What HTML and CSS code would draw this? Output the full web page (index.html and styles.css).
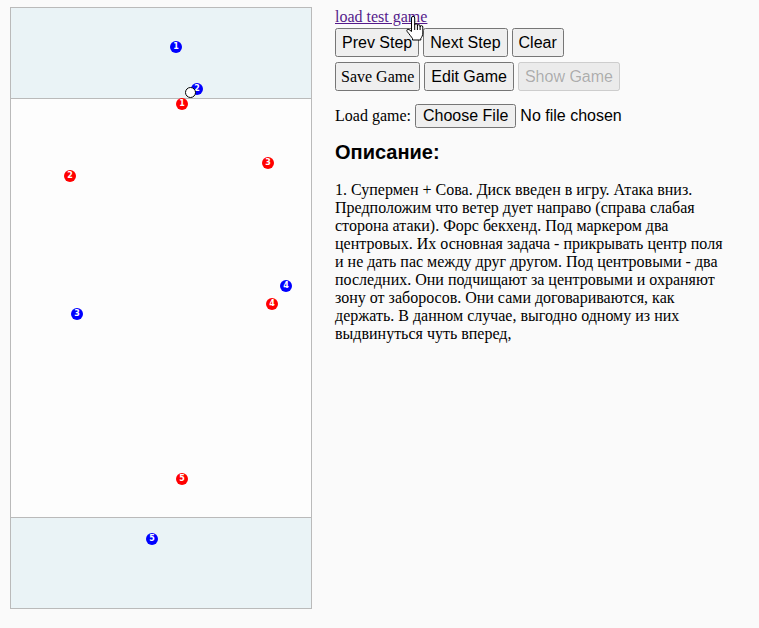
FILE: index.html
```html
<!DOCTYPE html>
<html>
<head>
<meta charset="utf-8">
<link rel="stylesheet" href="styles.css">
</head>
<body>
<div class="page">
  <div class="field">
    <div class="zone"></div>
    <div class="middle"></div>
    <div class="zone zone-bottom"></div>
    <span class="p blue" style="left:159px;top:33px">1</span>
    <span class="p blue" style="left:180px;top:75px">2</span>
    <span class="ball" style="left:174px;top:79px"></span>
    <span class="p red" style="left:165px;top:90px">1</span>
    <span class="p red" style="left:53px;top:162px">2</span>
    <span class="p red" style="left:251px;top:149px">3</span>
    <span class="p blue" style="left:269px;top:272px">4</span>
    <span class="p red" style="left:255px;top:290px">4</span>
    <span class="p blue" style="left:60px;top:300px">3</span>
    <span class="p red" style="left:165px;top:465px">5</span>
    <span class="p blue" style="left:135px;top:525px">5</span>
  </div>
  <div class="side">
    <div class="linkline"><a href="#" class="testlink">load test game</a></div>
    <div class="row row1">
      <button class="btn">Prev Step</button> <button class="btn">Next Step</button> <button class="btn">Clear</button>
    </div>
    <div class="row row2">
      <button class="btn btn-serif">Save Game</button> <button class="btn">Edit Game</button> <button class="btn" disabled>Show Game</button>
    </div>
    <div class="loadrow">Load game: <input type="file" class="file"></div>
    <h3 class="title">Описание:</h3>
    <p class="desc">1. Супермен + Сова. Диск введен в игру. Атака вниз. Предположим что ветер дует направо (справа слабая сторона атаки). Форс бекхенд. Под маркером два центровых. Их основная задача - прикрывать центр поля и не дать пас между друг другом. Под центровыми - два последних. Они подчищают за центровыми и охраняют зону от заборосов. Они сами договариваются, как держать. В данном случае, выгодно одному из них выдвинуться чуть вперед,</p>
    <svg class="cursor" width="18" height="25" viewBox="0 0 18 25">
      <path d="M5.5,2 a1.6,1.6 0 0 1 3.2,0 V9 a1.35,1.35 0 0 1 2.7,0 V10 a1.35,1.35 0 0 1 2.7,0 V11 a1.35,1.35 0 0 1 2.7,0 V17 c0,2.5 -1,4 -2,5.5 V24 H6.5 V22.5 C5.5,21 3.5,18.5 1.2,15.5 c-1,-1.5 0.3,-3 1.8,-2 L5.5,15.5 Z" fill="#fff" stroke="#000" stroke-width="1" stroke-linejoin="round"/>
      <path d="M8.7,9 V14 M11.4,10 V14 M14.1,11 V14" stroke="#000" stroke-width="1" fill="none"/>
    </svg>
  </div>
</div>
</body>
</html>
```
FILE: styles.css
```css
html, body {
  margin: 0;
  padding: 0;
  background: #fafafa;
}
body {
  font-family: "Liberation Serif", "Times New Roman", serif;
  font-size: 16px;
  color: #000;
}
.page {
  display: flex;
  align-items: flex-start;
  padding: 7px 0 0 10px;
}
.field {
  position: relative;
  width: 300px;
  border: 1px solid #bababa;
  background: #fdfdfd;
  display: flex;
  flex-direction: column;
  flex-shrink: 0;
}
.zone {
  height: 90px;
  background: #eaf3f6;
  border-bottom: 1px solid #bababa;
}
.zone-bottom {
  border-bottom: none;
  border-top: 1px solid #bababa;
}
.middle {
  height: 418px;
}
.p {
  position: absolute;
  width: 12px;
  height: 12px;
  border-radius: 50%;
  color: #fff;
  font-family: "DejaVu Sans", sans-serif;
  font-weight: bold;
  font-size: 8px;
  line-height: 12px;
  text-align: center;
}
.blue { background: #0000ff; }
.red { background: #ff0000; }
.ball {
  position: absolute;
  width: 9px;
  height: 9px;
  border-radius: 50%;
  background: #fff;
  border: 1px solid #000;
}
.side {
  position: relative;
  margin-left: 23px;
  margin-top: 1px;
  display: flex;
  flex-direction: column;
  align-items: flex-start;
}
.linkline {
  line-height: 18px;
}
.testlink {
  color: #551a8b;
}
.row {
  display: flex;
  gap: 4px;
}
.row1 { margin-top: 2px; }
.row2 { margin-top: 5px; gap: 4px; }
.btn {
  font-family: "Liberation Sans", Arial, sans-serif;
  font-size: 16px;
  padding: 3px 5px;
  height: 29px;
}
.btn-serif {
  font-family: "Liberation Serif", "Times New Roman", serif;
  padding: 3px 4px;
}
.loadrow {
  margin-top: 13px;
  display: flex;
  align-items: center;
  gap: 4px;
}
.file {
  font-family: "Liberation Sans", Arial, sans-serif;
  font-size: 16px;
}
.title {
  font-family: "Liberation Sans", Arial, sans-serif;
  font-size: 20px;
  font-weight: bold;
  margin: 13px 0 0;
  line-height: 23px;
}
.desc {
  width: 395px;
  margin: 17px 0 0;
  line-height: 18px;
}
.cursor {
  position: absolute;
  left: 71px;
  top: 8px;
}
```
